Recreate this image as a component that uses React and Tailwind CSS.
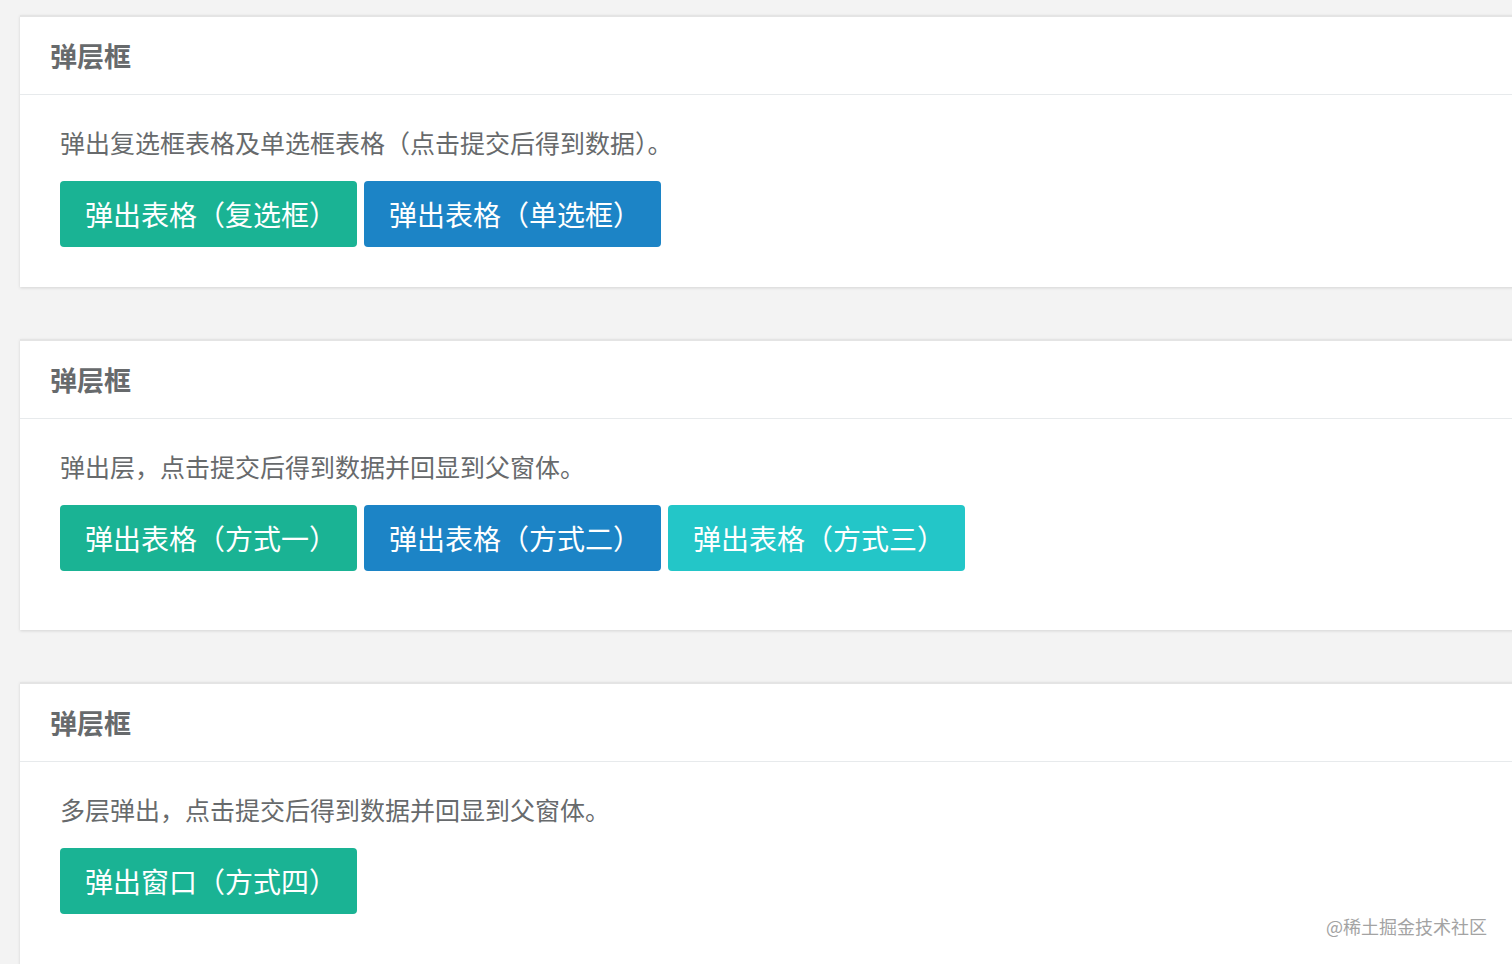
const font = { fontFamily: '"Microsoft YaHei", "Noto Sans CJK SC", "Noto Sans", sans-serif' };

const Card = ({ text, buttons, pb }) => (
  <div className={`ml-[20px] w-[1520px] bg-white border-t-2 border-[#e4e4e4] shadow-[0_1px_3px_rgba(0,0,0,0.13)] ${pb}`}>
    <div className="h-[78px] flex items-center pl-[30px] border-b border-[#e7eaec]">
      <h2 className="text-[27px] font-bold text-[#676a6c] leading-none">弹层框</h2>
    </div>
    <div className="pl-[40px] pt-[30px]">
      <p className="text-[25px] leading-[35px] text-[#676a6c]">{text}</p>
      <div className="flex gap-[7px] mt-[21px]">
        {buttons.map((b) => (
          <button
            key={b.label}
            className={`w-[297px] h-[66px] rounded-[4px] text-white text-[28px] pl-[25px] text-left ${b.color}`}
          >
            {b.label}
          </button>
        ))}
      </div>
    </div>
  </div>
);

export default function App() {
  return (
    <div style={font} className="relative min-h-screen h-[964px] overflow-hidden bg-[#f3f3f3] pt-[15px]">
      <div className="flex flex-col gap-[52px]">
        <Card
          text="弹出复选框表格及单选框表格（点击提交后得到数据）。"
          pb="pb-[40px]"
          buttons={[
            { label: '弹出表格（复选框）', color: 'bg-[#1ab394]' },
            { label: '弹出表格（单选框）', color: 'bg-[#1c84c6]' },
          ]}
        />
        <Card
          text="弹出层，点击提交后得到数据并回显到父窗体。"
          pb="pb-[59px]"
          buttons={[
            { label: '弹出表格（方式一）', color: 'bg-[#1ab394]' },
            { label: '弹出表格（方式二）', color: 'bg-[#1c84c6]' },
            { label: '弹出表格（方式三）', color: 'bg-[#23c6c8]' },
          ]}
        />
        <Card
          text="多层弹出，点击提交后得到数据并回显到父窗体。"
          pb="pb-[80px]"
          buttons={[{ label: '弹出窗口（方式四）', color: 'bg-[#1ab394]' }]}
        />
      </div>
      <div className="absolute right-[25px] top-[917px] text-[18px] text-[#a3a3a3] leading-none">@稀土掘金技术社区</div>
    </div>
  );
}
